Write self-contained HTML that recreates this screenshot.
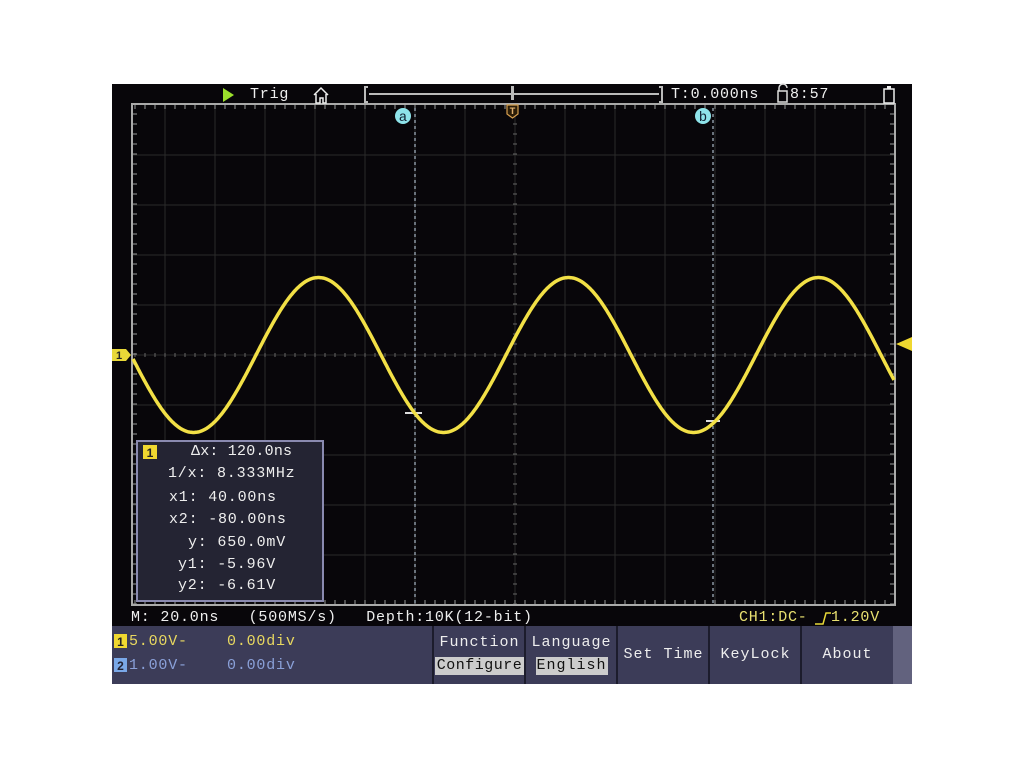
<!DOCTYPE html>
<html><head><meta charset="utf-8"><style>
html,body{margin:0;padding:0;background:#fff;width:1024px;height:768px;overflow:hidden}
#scr{position:absolute;left:112px;top:84px;width:800px;height:600px;background:#08060a}
.t{position:absolute;font-family:"Liberation Mono",monospace;font-size:15px;letter-spacing:0.8px;color:#eee;white-space:pre;line-height:16px}
svg{position:absolute;left:0;top:0}
.btn{position:absolute;top:626px;height:58px;background:#3c3c58;border-left:2px solid #1c1c2c;box-sizing:border-box;font-family:"Liberation Mono",monospace;font-size:15px;letter-spacing:1px;color:#eee;text-align:center}
</style></head><body>
<div id="scr"></div>
<svg width="1024" height="768" id="sv">
<rect x="112" y="626" width="800" height="58" fill="#3c3c58"/>
<rect x="893" y="626" width="19" height="58" fill="#62627e"/>
<g id="grid"></g>
<rect x="132" y="104" width="763" height="501" fill="none" stroke="#aaa" stroke-width="2"/>
<line x1="415" y1="108" x2="415" y2="605" stroke="#cde" stroke-dasharray="3,3"/>
<line x1="713" y1="108" x2="713" y2="605" stroke="#cde" stroke-dasharray="3,3"/>
<line x1="405" y1="413" x2="422" y2="413" stroke="#ddd" stroke-width="2"/>
<line x1="706" y1="421" x2="720" y2="421" stroke="#ddd" stroke-width="2"/>
<path id="sine" fill="none" stroke="#f2e046" stroke-width="3.5"/>
<circle cx="403" cy="116" r="8" fill="#8ee3ea"/>
<text x="403" y="121" font-family="Liberation Mono" font-size="14" text-anchor="middle" fill="#123">a</text>
<circle cx="703" cy="116" r="8" fill="#8ee3ea"/>
<text x="703" y="121" font-family="Liberation Mono" font-size="14" text-anchor="middle" fill="#123">b</text>
<path d="M507 105h11v9l-5.5 4l-5.5 -4z" fill="#2a1c08" stroke="#d8a050" stroke-width="1.2"/>
<text x="512.5" y="114" font-family="Liberation Mono" font-size="10" font-weight="bold" text-anchor="middle" fill="#e0b070">T</text>
<path d="M112 349h14l5 6l-5 6h-14z" fill="#e8d838"/>
<text x="119" y="359" font-family="Liberation Sans" font-size="11" font-weight="bold" text-anchor="middle" fill="#222">1</text>
<path d="M912 337v14l-16 -7z" fill="#f0d830"/>
<path d="M223 88l11 7l-11 7z" fill="#9be02c"/>
<path d="M314 95l7-7l7 7M316 94v9h4v-5h3v5h3v-9" fill="none" stroke="#eee" stroke-width="1.5"/>
<path d="M368 87h-3v15h3" fill="none" stroke="#bbb" stroke-width="2"/>
<path d="M659 87h3v15h-3" fill="none" stroke="#bbb" stroke-width="2"/>
<line x1="369" y1="94" x2="659" y2="94" stroke="#bbb" stroke-width="2"/>
<rect x="511" y="86" width="3" height="14" fill="#bbb"/>
<rect x="778" y="91" width="9" height="11" fill="none" stroke="#ddd" stroke-width="1.5"/>
<path d="M779 91v-3a4 4 0 0 1 8 0" fill="none" stroke="#ddd" stroke-width="1.5"/>
<rect x="884" y="89" width="10" height="14" fill="none" stroke="#eee" stroke-width="1.5"/>
<rect x="887" y="86" width="4" height="3" fill="#eee"/>
<rect x="137" y="441" width="186" height="160" fill="#242433" stroke="#8a8ab0" stroke-width="2"/>
<rect x="143" y="445" width="14" height="14" fill="#f0d830"/>
<text x="150" y="457" font-family="Liberation Sans" font-size="12" font-weight="bold" text-anchor="middle" fill="#222">1</text>
<rect x="114" y="634" width="13" height="14" fill="#f0d830"/>
<text x="120.5" y="646" font-family="Liberation Sans" font-size="12" font-weight="bold" text-anchor="middle" fill="#222">1</text>
<rect x="114" y="658" width="13" height="14" fill="#7aa8e8"/>
<text x="120.5" y="670" font-family="Liberation Sans" font-size="12" font-weight="bold" text-anchor="middle" fill="#223">2</text>
<path d="M815 624h8l3-11h5" fill="none" stroke="#e8d838" stroke-width="1.5"/>
</svg>
<div class="t" style="left:250px;top:87px">Trig</div>
<div class="t" style="left:671px;top:87px">T:0.000ns</div>
<div class="t" style="left:790px;top:87px">8:57</div>
<div class="t" style="left:131px;top:610px">M: 20.0ns   (500MS/s)   Depth:10K(12-bit)</div>
<div class="t" style="left:739px;top:610px;color:#e8e070">CH1:DC-</div>
<div class="t" style="left:831px;top:610px;color:#e8e070">1.20V</div>
<div class="t" style="left:129px;top:634px;color:#e8d860">5.00V-    0.00div</div>
<div class="t" style="left:129px;top:658px;color:#8aa0d8">1.00V-    0.00div</div>
<div class="t" style="left:191px;top:444px;letter-spacing:0.2px">Δx: 120.0ns</div>
<div class="t" style="left:168px;top:466px">1/x: 8.333MHz</div>
<div class="t" style="left:169px;top:490px">x1: 40.00ns</div>
<div class="t" style="left:169px;top:512px">x2: -80.00ns</div>
<div class="t" style="left:188px;top:535px">y: 650.0mV</div>
<div class="t" style="left:178px;top:557px">y1: -5.96V</div>
<div class="t" style="left:178px;top:578px">y2: -6.61V</div>
<div class="btn" style="left:432px;width:93px"><div style="margin-top:8px">Function</div><div style="margin:6px 1px 0;background:#ccc;color:#111;height:18px;line-height:18px;letter-spacing:0.5px">Configure</div></div>
<div class="btn" style="left:524px;width:93px"><div style="margin-top:8px">Language</div><div style="margin:6px auto 0;width:72px;background:#ccc;color:#111;height:18px;line-height:18px">English</div></div>
<div class="btn" style="left:616px;width:93px;line-height:58px">Set Time</div>
<div class="btn" style="left:708px;width:93px;line-height:58px">KeyLock</div>
<div class="btn" style="left:800px;width:93px;line-height:58px">About</div>
<script>
var g=document.getElementById('grid'),s='';
function L(a,b,c,d,st,w){s+='<line x1="'+a+'" y1="'+b+'" x2="'+c+'" y2="'+d+'" stroke="'+st+'" stroke-width="'+(w||1)+'"/>';}
for(var x=165;x<=865;x+=50)L(x,105,x,604,'#2a2a2a');
for(var y=155;y<=555;y+=50)L(133,y,894,y,'#2a2a2a');
for(var x=135;x<895;x+=10){L(x,105,x,109,'#999');L(x,600,x,604,'#999');L(x,353,x,357,'#666');}
for(var y=114;y<605;y+=10){L(133,y,137,y,'#999');L(890,y,894,y,'#999');L(513,y,517,y,'#666');}
g.innerHTML=s;
var p='';for(var x=133;x<=894;x+=1){var y=355-77.5*Math.sin(2*Math.PI*(x-256)/250);p+=(x==133?'M':'L')+x+' '+y.toFixed(1);}
document.getElementById('sine').setAttribute('d',p);
</script>
</body></html>
